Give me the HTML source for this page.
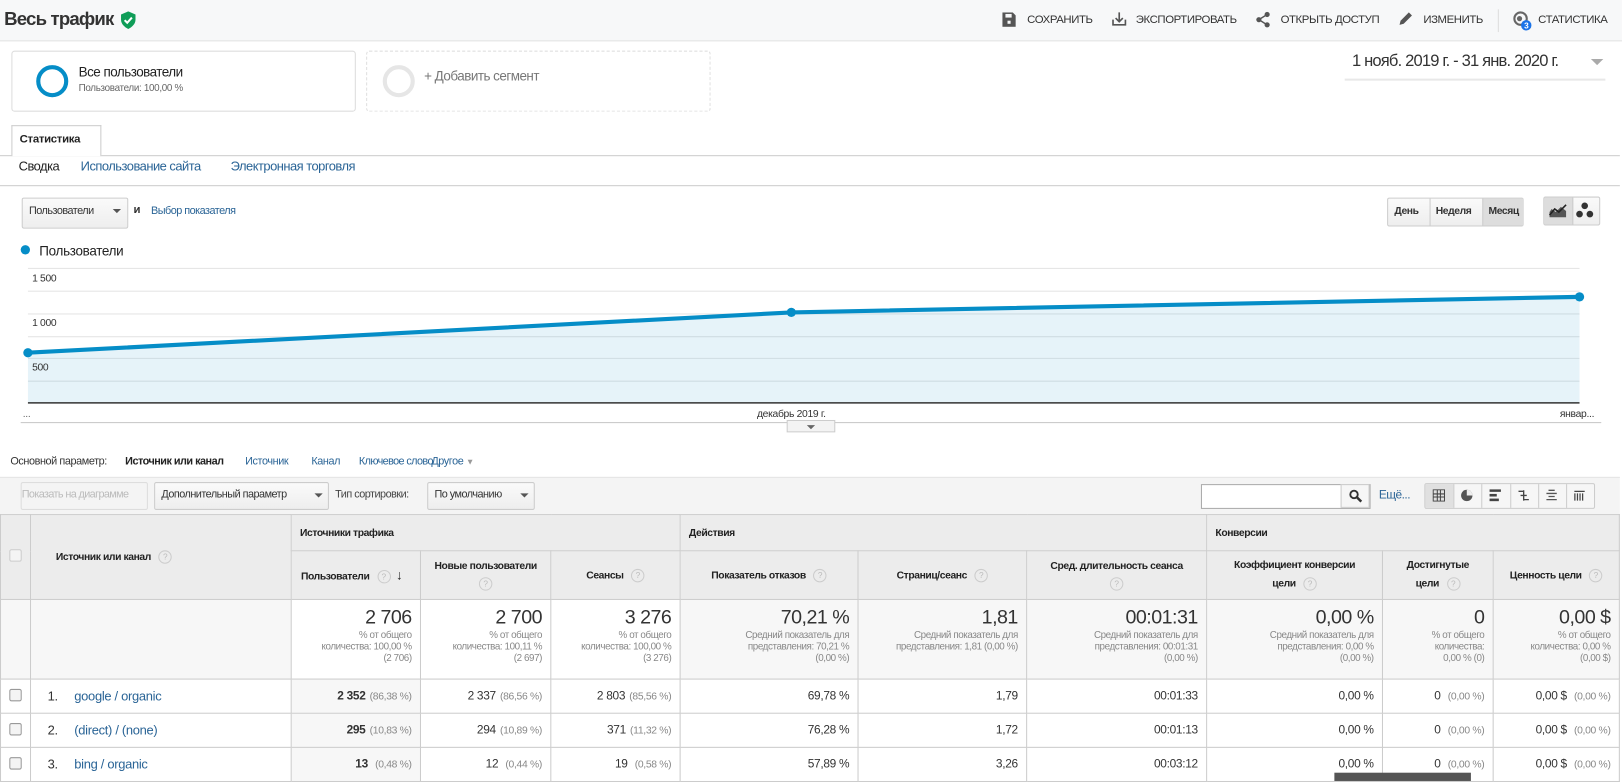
<!DOCTYPE html>
<html><head><meta charset="utf-8">
<style>
html,body{margin:0;padding:0;width:1622px;height:778px;overflow:hidden;background:#fff}
#w{position:absolute;left:0;top:0;width:1568px;height:752px;transform:scale(1.0344);transform-origin:0 0;font-family:"Liberation Sans",sans-serif;color:#333;letter-spacing:-0.3px}
.a{position:absolute;white-space:nowrap}
.lnk{color:#2a6496}
.tb{font-size:11px;color:#333;top:13px;letter-spacing:-0.4px}
.btn{position:absolute;border:1px solid #ccc;border-radius:2px;background:linear-gradient(#fafafa,#eee);box-sizing:border-box}
table{border-collapse:collapse;table-layout:fixed;position:absolute;left:0;top:497px;width:1565px;font-size:11.5px}
td{border:1px solid #ccc;padding:0 8px;box-sizing:border-box;overflow:hidden;white-space:nowrap}
.h td{background:#ececec;font-weight:bold;font-size:10px;color:#222;letter-spacing:-0.4px}
.tot td{text-align:right;vertical-align:top;padding-top:8px;color:#888;font-size:9.5px;line-height:11px;letter-spacing:-0.4px}
.tot td b{display:block;font-weight:normal;font-size:19px;line-height:20px;color:#333;margin-bottom:1px;letter-spacing:-0.5px}
.r td{text-align:right;height:33px}
.r td i{font-style:normal;color:#888;font-size:10px;margin-left:4px}
.q{display:inline-block;width:11px;height:11px;border:1px solid #ccc;border-radius:50%;font-size:8px;line-height:11px;text-align:center;color:#bbb;font-weight:normal;margin-left:5px;vertical-align:middle;letter-spacing:0}
.cb{display:inline-block;width:10px;height:10px;border:1px solid #999;border-radius:2px;background:#f4f4f4}
</style></head><body><div id="w">
<!-- header -->
<div class="a" style="left:0;top:0;width:1568px;height:39px;background:#f7f8f9;border-bottom:1px solid #e2e2e2"></div>
<div class="a" style="left:4px;top:8px;font-size:18px;font-weight:bold;color:#333;letter-spacing:-0.8px">Весь трафик</div>
<svg class="a" style="left:116px;top:11px" width="16" height="17" viewBox="0 0 16 17"><path d="M8 0 L15 3 V8 C15 12 12 15 8 17 C4 15 1 12 1 8 V3Z" fill="#0f9d58"/><path d="M4.5 8.5 L7 11 L11.5 6" stroke="#fff" stroke-width="2" fill="none"/></svg>
<svg class="a" style="left:969px;top:12px" width="13" height="14"><path d="M0 0H10L13 3V14H0Z" fill="#555"/><rect x="3" y="1.5" width="6" height="3.5" fill="#f7f8f9"/><rect x="5" y="8" width="3" height="3" fill="#f7f8f9"/></svg>
<div class="a tb" style="left:993px">СОХРАНИТЬ</div>
<svg class="a" style="left:1075px;top:11px" width="14" height="15"><path d="M7 1V10M3.5 6.5L7 10L10.5 6.5M1 8V13H13V8" stroke="#555" stroke-width="1.6" fill="none"/></svg>
<div class="a tb" style="left:1098px">ЭКСПОРТИРОВАТЬ</div>
<svg class="a" style="left:1214px;top:11px" width="14" height="16"><circle cx="11" cy="3" r="2.5" fill="#555"/><circle cx="3" cy="8" r="2.5" fill="#555"/><circle cx="11" cy="13" r="2.5" fill="#555"/><path d="M11 3L3 8L11 13" stroke="#555" stroke-width="1.4" fill="none"/></svg>
<div class="a tb" style="left:1238px">ОТКРЫТЬ ДОСТУП</div>
<svg class="a" style="left:1352px;top:11px" width="14" height="14"><path d="M1 13L2 9L10 1L13 4L5 12Z" fill="#555"/></svg>
<div class="a tb" style="left:1376px">ИЗМЕНИТЬ</div>
<div class="a" style="left:1448px;top:9px;width:1px;height:22px;background:#ddd"></div>
<svg class="a" style="left:1461px;top:9px" width="22" height="22"><circle cx="9" cy="9" r="6" stroke="#666" stroke-width="2" fill="none"/><circle cx="8" cy="9" r="2.5" fill="#666"/><circle cx="14.5" cy="15.5" r="5" fill="#1a73e8"/><text x="14.5" y="18.5" font-size="8" fill="#fff" text-anchor="middle" font-family="Liberation Sans" font-weight="bold">3</text></svg>
<div class="a tb" style="left:1487px">СТАТИСТИКА</div>

<!-- segments -->
<div class="a" style="left:11px;top:49px;width:331px;height:57px;border:1px solid #ddd;border-radius:3px"></div>
<div class="a" style="left:35px;top:63px;width:31px;height:31px;border:4px solid #058dc7;border-radius:50%;box-sizing:border-box"></div>
<div class="a" style="left:76px;top:62px;font-size:13px;color:#222;letter-spacing:-0.5px">Все пользователи</div>
<div class="a" style="left:76px;top:80px;font-size:9.5px;color:#666">Пользователи: 100,00 %</div>
<div class="a" style="left:354px;top:49px;width:331px;height:57px;border:1px dashed #ddd;border-radius:3px"></div>
<div class="a" style="left:370px;top:63px;width:31px;height:31px;border:4px solid #e6e6e6;border-radius:50%;box-sizing:border-box"></div>
<div class="a" style="left:410px;top:66px;font-size:13px;color:#777;letter-spacing:-0.5px">+ Добавить сегмент</div>
<div class="a" style="left:1307px;top:51px;font-size:16px;color:#333;letter-spacing:-0.8px">1 нояб. 2019 г. - 31 янв. 2020 г.</div>
<div class="a" style="left:1538px;top:57px;border-left:6px solid transparent;border-right:6px solid transparent;border-top:6px solid #aaa"></div>
<div class="a" style="left:1300px;top:76px;width:252px;height:2px;background:#e8e8e8"></div>

<!-- tabs -->
<div class="a" style="left:11px;top:121px;width:85px;height:29px;border:1px solid #ccc;border-bottom:none;background:#fff;z-index:2"></div>
<div class="a" style="left:19px;top:129px;font-size:11px;font-weight:bold;color:#222;z-index:3">Статистика</div>
<div class="a" style="left:0;top:150px;width:1566px;height:1px;background:#ccc"></div>
<div class="a" style="left:18px;top:154px;font-size:12.5px;color:#222;letter-spacing:-0.5px">Сводка</div>
<div class="a lnk" style="left:78px;top:154px;font-size:12.5px;letter-spacing:-0.5px">Использование сайта</div>
<div class="a lnk" style="left:223px;top:154px;font-size:12.5px;letter-spacing:-0.5px">Электронная торговля</div>
<div class="a" style="left:0;top:179px;width:1566px;height:1px;background:#ccc"></div>

<!-- chart controls -->
<div class="btn" style="left:21px;top:191px;width:103px;height:30px"></div>
<div class="a" style="left:28px;top:198px;font-size:10.5px;color:#333;letter-spacing:-0.5px">Пользователи</div>
<div class="a" style="left:109px;top:202px;border-left:4px solid transparent;border-right:4px solid transparent;border-top:4px solid #555"></div>
<div class="a" style="left:129px;top:197px;font-size:11px;font-weight:bold">и</div>
<div class="a lnk" style="left:146px;top:198px;font-size:10.5px;letter-spacing:-0.5px">Выбор показателя</div>
<div class="btn" style="left:1341px;top:191px;width:132px;height:28px"></div>
<div class="a" style="left:1433px;top:192px;width:40px;height:26px;background:#ddd"></div>
<div class="a" style="left:1382px;top:192px;width:1px;height:26px;background:#ccc"></div>
<div class="a" style="left:1433px;top:192px;width:1px;height:26px;background:#ccc"></div>
<div class="a" style="left:1348px;top:199px;font-size:10px;font-weight:bold;letter-spacing:-0.4px">День</div>
<div class="a" style="left:1388px;top:199px;font-size:10px;font-weight:bold;letter-spacing:-0.4px">Неделя</div>
<div class="a" style="left:1439px;top:199px;font-size:10px;font-weight:bold;letter-spacing:-0.4px">Месяц</div>
<div class="btn" style="left:1492px;top:190px;width:55px;height:28px"></div>
<div class="a" style="left:1493px;top:191px;width:27px;height:26px;background:#ddd;border-right:1px solid #ccc"></div>
<svg class="a" style="left:1497px;top:196px" width="18" height="16"><path d="M1 14H17V8L12 4L7 9L3 6L1 9Z" fill="#555"/><path d="M1 12L6 6L10 9L17 2" stroke="#222" stroke-width="1.5" fill="none"/></svg>
<svg class="a" style="left:1522px;top:194px" width="20" height="20"><circle cx="10" cy="5" r="3.2" fill="#333"/><circle cx="5" cy="13" r="3.2" fill="#333"/><circle cx="15" cy="13" r="3.2" fill="#333"/></svg>

<!-- chart -->
<div class="a" style="left:20px;top:237px;width:9px;height:9px;border-radius:50%;background:#058dc7"></div>
<div class="a" style="left:38px;top:235px;font-size:13px;color:#222">Пользователи</div>
<svg class="a" style="left:0;top:0" width="1568" height="430">
<g stroke="#e6e6e6" stroke-width="1">
<line x1="27" y1="259.5" x2="1527" y2="259.5"/><line x1="27" y1="281.5" x2="1527" y2="281.5"/><line x1="27" y1="303.5" x2="1527" y2="303.5"/><line x1="27" y1="325.5" x2="1527" y2="325.5"/><line x1="27" y1="346.5" x2="1527" y2="346.5"/><line x1="27" y1="368.5" x2="1527" y2="368.5"/></g>
<path d="M27 341 L765 302 L1527 287 L1527 389 L27 389Z" fill="#058dc7" fill-opacity="0.1"/>
<path d="M27 341 L765 302 L1527 287" stroke="#058dc7" stroke-width="4" fill="none"/>
<circle cx="27" cy="341" r="4.5" fill="#058dc7"/><circle cx="765" cy="302" r="4.5" fill="#058dc7"/><circle cx="1527" cy="287" r="4.5" fill="#058dc7"/>
<line x1="27" y1="389.5" x2="1527" y2="389.5" stroke="#333" stroke-width="1.5"/>
<g font-family="Liberation Sans" font-size="10" fill="#333"><text x="31" y="272">1 500</text><text x="31" y="315">1 000</text><text x="31" y="358">500</text>
<text x="22" y="403" fill="#666">...</text><text x="765" y="403" text-anchor="middle">декабрь 2019 г.</text><text x="1508" y="403">январ...</text></g>
<line x1="20" y1="408.5" x2="1548" y2="408.5" stroke="#ccc"/>
<rect x="761" y="406.5" width="46" height="11" fill="#f3f3f3" stroke="#ccc"/><path d="M780 411 L788 411 L784 415Z" fill="#666"/>
</svg>

<!-- primary dimension -->
<div class="a" style="left:10px;top:440px;font-size:10.5px;color:#333;letter-spacing:-0.4px">Основной параметр:</div>
<div class="a" style="left:121px;top:440px;font-size:10.5px;font-weight:bold;color:#222;letter-spacing:-0.5px">Источник или канал</div>
<div class="a lnk" style="left:237px;top:440px;font-size:10.5px;letter-spacing:-0.4px">Источник</div>
<div class="a lnk" style="left:301px;top:440px;font-size:10.5px;letter-spacing:-0.4px">Канал</div>
<div class="a lnk" style="left:347px;top:440px;font-size:10.5px;letter-spacing:-0.6px">Ключевое слово</div>
<div class="a lnk" style="left:417px;top:440px;font-size:10.5px;letter-spacing:-0.4px">Другое <span style="color:#999;font-size:8px">▼</span></div>

<!-- toolbar band -->
<div class="a" style="left:0;top:461px;width:1566px;height:36px;background:#f4f4f4;border-top:1px solid #e4e4e4"></div>
<div class="btn" style="left:20px;top:466px;width:123px;height:27px;background:#f4f4f4;border-color:#ddd"></div>
<div class="a" style="left:21px;top:472px;font-size:10.5px;color:#bbb;letter-spacing:-0.6px">Показать на диаграмме</div>
<div class="btn" style="left:149px;top:466px;width:169px;height:27px"></div>
<div class="a" style="left:156px;top:472px;font-size:10.5px;letter-spacing:-0.5px">Дополнительный параметр</div>
<div class="a" style="left:304px;top:477px;border-left:4px solid transparent;border-right:4px solid transparent;border-top:4px solid #555"></div>
<div class="a" style="left:324px;top:472px;font-size:10.5px;color:#444;letter-spacing:-0.5px">Тип сортировки:</div>
<div class="btn" style="left:413px;top:466px;width:104px;height:27px"></div>
<div class="a" style="left:420px;top:472px;font-size:10.5px;letter-spacing:-0.5px">По умолчанию</div>
<div class="a" style="left:503px;top:477px;border-left:4px solid transparent;border-right:4px solid transparent;border-top:4px solid #555"></div>
<div class="a" style="left:1161px;top:468px;width:162px;height:22px;border:1px solid #aaa;background:#fff"></div>
<div class="a" style="left:1296px;top:468px;width:28px;height:23px;border:1px solid #ccc;background:#f6f6f6;box-sizing:border-box"></div>
<svg class="a" style="left:1304px;top:473px" width="13" height="13"><circle cx="5" cy="5" r="3.6" stroke="#333" stroke-width="1.8" fill="none"/><path d="M8 8L12 12" stroke="#333" stroke-width="2.4"/></svg>
<div class="a lnk" style="left:1333px;top:473px;font-size:11.5px;letter-spacing:-0.5px">Ещё...</div>
<div class="btn" style="left:1377px;top:467px;width:165px;height:25px;background:#f6f6f6"></div>
<div class="a" style="left:1378px;top:468px;width:27px;height:23px;background:#e0e0e0"></div>
<div class="a" style="left:1405px;top:468px;width:1px;height:23px;background:#ccc"></div>
<div class="a" style="left:1432px;top:468px;width:1px;height:23px;background:#ccc"></div>
<div class="a" style="left:1460px;top:468px;width:1px;height:23px;background:#ccc"></div>
<div class="a" style="left:1487px;top:468px;width:1px;height:23px;background:#ccc"></div>
<div class="a" style="left:1514px;top:468px;width:1px;height:23px;background:#ccc"></div>
<svg class="a" style="left:1385px;top:473px" width="12" height="12"><path d="M.5 .5H11.5V11.5H.5ZM4.5 .5V11.5M7.5 .5V11.5M.5 4.5H11.5M.5 7.5H11.5" stroke="#444" fill="none"/></svg>
<svg class="a" style="left:1412px;top:473px" width="12" height="12"><circle cx="6" cy="6" r="5.5" fill="#555"/><path d="M6 0.5V6H11.5A5.5 5.5 0 0 0 6 .5Z" fill="#eee"/></svg>
<svg class="a" style="left:1440px;top:473px" width="12" height="12"><rect x="0" y="0" width="11" height="2.5" fill="#444"/><rect x="0" y="4.5" width="7" height="2.5" fill="#444"/><rect x="0" y="9" width="9" height="2.5" fill="#444"/></svg>
<svg class="a" style="left:1467px;top:473px" width="12" height="12"><path d="M1 2H6V10H11M3 6H9M6 1V11" stroke="#444" stroke-width="1.3" fill="none"/></svg>
<svg class="a" style="left:1494px;top:473px" width="12" height="12"><path d="M3 1H9M1 4H11M3 7H9M1 10H11" stroke="#555" stroke-width="1.3"/></svg>
<svg class="a" style="left:1521px;top:473px" width="12" height="12"><path d="M1 2H11M1.5 4V11M4 4V11M6.5 4V11M9 4V11" stroke="#444" stroke-width="1.2"/></svg>

<table>
<colgroup><col style="width:29px"><col style="width:252px"><col style="width:125px"><col style="width:126px"><col style="width:125px"><col style="width:172px"><col style="width:163px"><col style="width:174px"><col style="width:170px"><col style="width:107px"><col style="width:122px"></colgroup>
<tr class="h" style="height:35px"><td rowspan="2" style="text-align:center"><span class="cb" style="border-color:#ccc"></span></td><td rowspan="2" style="padding-left:24px">Источник или канал <span class="q">?</span></td><td colspan="3">Источники трафика</td><td colspan="3">Действия</td><td colspan="3">Конверсии</td></tr>
<tr class="h" style="height:47px"><td style="padding-left:9px">Пользователи <span class="q">?</span> <span style="font-size:13px;margin-left:3px">↓</span></td><td style="text-align:center;line-height:17px">Новые пользователи<br><span class="q" style="margin:0">?</span></td><td style="text-align:center">Сеансы <span class="q">?</span></td><td style="text-align:center">Показатель отказов <span class="q">?</span></td><td style="text-align:center">Страниц/сеанс <span class="q">?</span></td><td style="text-align:center;line-height:17px">Сред. длительность сеанса<br><span class="q" style="margin:0">?</span></td><td style="text-align:center;line-height:18px">Коэффициент конверсии<br>цели <span class="q">?</span></td><td style="text-align:center;line-height:18px">Достигнутые<br>цели <span class="q">?</span></td><td style="text-align:center">Ценность цели <span class="q">?</span></td></tr>
<tr class="tot" style="height:77px"><td style="background:#f7f7f7"></td><td style="background:#f7f7f7"></td>
<td><b>2 706</b>% от общего<br>количества: 100,00 %<br>(2 706)</td>
<td><b>2 700</b>% от общего<br>количества: 100,11 %<br>(2 697)</td>
<td><b>3 276</b>% от общего<br>количества: 100,00 %<br>(3 276)</td>
<td style="background:#f7f7f7"><b>70,21 %</b>Средний показатель для<br>представления: 70,21 %<br>(0,00 %)</td>
<td style="background:#f7f7f7"><b>1,81</b>Средний показатель для<br>представления: 1,81 (0,00 %)</td>
<td style="background:#f7f7f7"><b>00:01:31</b>Средний показатель для<br>представления: 00:01:31<br>(0,00 %)</td>
<td style="background:#f7f7f7"><b>0,00 %</b>Средний показатель для<br>представления: 0,00 %<br>(0,00 %)</td>
<td style="background:#f7f7f7"><b>0</b>% от общего<br>количества:<br>0,00 % (0)</td>
<td style="background:#f7f7f7"><b>0,00 $</b>% от общего<br>количества: 0,00 %<br>(0,00 $)</td></tr>
<tr class="r"><td style="text-align:center;padding:0"><span class="cb"></span></td><td style="text-align:left;padding-left:16px;font-size:12.5px"><span style="margin-right:16px">1.</span><span class="lnk">google / organic</span></td><td style="background:#f7f7f7"><b>2 352</b><i>(86,38 %)</i></td><td>2 337<i>(86,56 %)</i></td><td>2 803<i>(85,56 %)</i></td><td>69,78 %</td><td>1,79</td><td>00:01:33</td><td>0,00 %</td><td>0 <i>(0,00 %)</i></td><td>0,00 $ <i>(0,00 %)</i></td></tr>
<tr class="r"><td style="text-align:center;padding:0"><span class="cb"></span></td><td style="text-align:left;padding-left:16px;font-size:12.5px"><span style="margin-right:16px">2.</span><span class="lnk">(direct) / (none)</span></td><td style="background:#f7f7f7"><b>295</b><i>(10,83 %)</i></td><td>294<i>(10,89 %)</i></td><td>371<i>(11,32 %)</i></td><td>76,28 %</td><td>1,72</td><td>00:01:13</td><td>0,00 %</td><td>0 <i>(0,00 %)</i></td><td>0,00 $ <i>(0,00 %)</i></td></tr>
<tr class="r"><td style="text-align:center;padding:0"><span class="cb"></span></td><td style="text-align:left;padding-left:16px;font-size:12.5px"><span style="margin-right:16px">3.</span><span class="lnk">bing / organic</span></td><td style="background:#f7f7f7"><b>13</b> <i>(0,48 %)</i></td><td>12 <i>(0,44 %)</i></td><td>19 <i>(0,58 %)</i></td><td>57,89 %</td><td>3,26</td><td>00:03:12</td><td>0,00 %</td><td>0 <i>(0,00 %)</i></td><td>0,00 $ <i>(0,00 %)</i></td></tr>
</table>
<div class="a" style="left:1290px;top:747px;width:132px;height:8px;background:#555"></div>
</div></body></html>
